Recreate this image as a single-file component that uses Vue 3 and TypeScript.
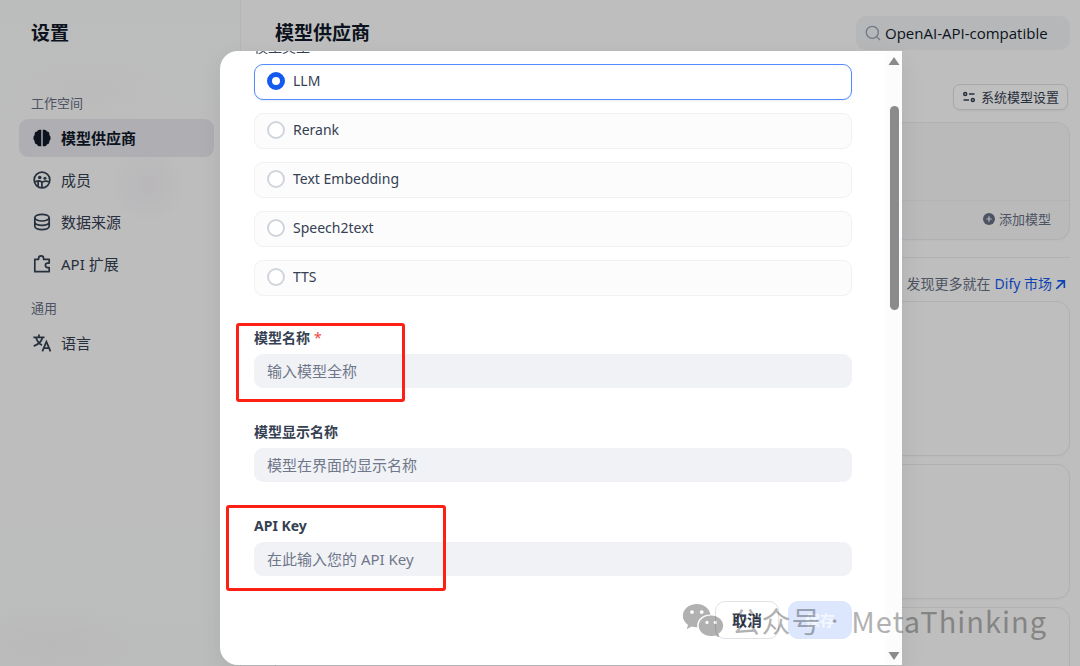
<script setup lang="ts">
import { ref } from 'vue'

interface Field {
  id: string
  label: string
  placeholder: string
  required?: boolean
  mark?: string
}

const modelTypes: string[] = ['LLM', 'Rerank', 'Text Embedding', 'Speech2text', 'TTS']
const selectedType = ref('LLM')
const query = ref('OpenAI-API-compatible')

const fields: Field[] = [
  { id: 'model-name', label: '模型名称', placeholder: '输入模型全称', required: true, mark: 'mark-name' },
  { id: 'display-name', label: '模型显示名称', placeholder: '模型在界面的显示名称' },
  { id: 'api-key', label: 'API Key', placeholder: '在此输入您的 API Key', mark: 'mark-key' },
]
const values = ref<Record<string, string>>({})
</script>

<template>
  <div class="page">
    <aside class="sidebar">
      <h1 class="heading">设置</h1>
      <nav class="nav">
        <h2 class="group">工作空间</h2>
        <a class="item active" href="#provider">
          <svg viewBox="0 0 20 20" fill="currentColor">
            <path d="M9.2.8v18.400H7.300a2.800 2.800 0 0 1-2.700-2.100A3.200 3.200 0 0 1 1.900 13.300 3.600 3.600 0 0 1 .5 10a3.600 3.600 0 0 1 1.400-3.300A3.200 3.200 0 0 1 4.600 2.900 2.800 2.800 0 0 1 7.300.8zM10.800.8v18.400h1.900a2.800 2.800 0 0 0 2.700-2.100 3.200 3.200 0 0 0 2.700-3.800A3.600 3.600 0 0 0 19.500 10a3.600 3.600 0 0 0-1.400-3.300 3.200 3.200 0 0 0-2.700-3.800A2.800 2.800 0 0 0 12.700.8z" />
          </svg>
          模型供应商
        </a>
        <a class="item" href="#members">
          <svg viewBox="0 0 20 20" fill="none" stroke="currentColor" stroke-width="1.9">
            <circle cx="10" cy="10" r="8.7" />
            <circle cx="7.500" cy="7.200" r="2" fill="currentColor" stroke="none" />
            <circle cx="13.300" cy="8" r="1.700" fill="currentColor" stroke="none" />
            <path d="M2 12.300C5 10.800 8.500 10.900 9.900 12.600V18M9.900 12.600C11.800 11 15 10.800 18 12M5.700 12v4.800" />
          </svg>
          成员
        </a>
        <a class="item" href="#sources">
          <svg viewBox="0 0 20 20" fill="none" stroke="currentColor" stroke-width="1.900">
            <ellipse cx="10" cy="5.200" rx="8" ry="3.700" />
            <path d="M2 5.200v9.600c0 2.100 3.500 3.700 8 3.700s8-1.600 8-3.700V5.200M2 10c0 2.100 3.500 3.700 8 3.700s8-1.600 8-3.700" />
          </svg>
          数据来源
        </a>
        <a class="item" href="#extensions">
          <svg viewBox="0 0 20 20" fill="none" stroke="currentColor" stroke-width="1.900" stroke-linejoin="round">
            <path d="M2 4.800H6.200V3.800a2.800 2.800 0 0 1 5.600 0V4.800H18V9H16.300a2.500 2.500 0 0 0 0 5H18V18.500H2z" />
          </svg>
          API 扩展
        </a>
        <h2 class="group second">通用</h2>
        <a class="item" href="#language">
          <svg viewBox="0 0 20 20" fill="none" stroke="currentColor" stroke-width="2">
            <path d="M.4 3.800H12.800M6.600.6V3.800M10.500 3.800C9.500 8 6 11.500.8 13.500M3.300 4C4.500 8 7 11 10 12.500M10.400 19.300 14.900 8.600 19.400 19.300M12.200 15.800H17.600" />
          </svg>
          语言
        </a>
      </nav>
    </aside>

    <main class="main">
      <header class="topbar">
        <h1 class="heading">模型供应商</h1>
        <label class="search">
          <svg viewBox="0 0 16 16" fill="none" stroke="currentColor" stroke-width="1.300">
            <circle cx="7.300" cy="7.300" r="6" />
            <path d="M11.600 11.600 15 15" />
          </svg>
          <input v-model="query" type="text" aria-label="搜索" />
        </label>
      </header>
      <div class="toolbar">
        <button class="system" type="button">
          <svg viewBox="0 0 14 14" fill="none" stroke="currentColor" stroke-width="1.500">
            <circle cx="3.200" cy="3.900" r="1.500" />
            <path d="M7 3.900H12.500M1.500 10.100H7" />
            <circle cx="10.800" cy="10.100" r="1.500" />
          </svg>
          系统模型设置
        </button>
      </div>
      <section class="card installed">
        <div class="card-foot">
          <button class="add" type="button">
            <svg viewBox="0 0 12 12">
              <circle cx="6" cy="6" r="6" fill="currentColor" />
              <path d="M6 3.300v5.400M3.300 6h5.400" stroke="#f4f4f5" stroke-width="1.200" />
            </svg>
            添加模型
          </button>
        </div>
      </section>
      <div class="discover">
        <span>发现更多就在</span>
        <a href="#market">
          Dify 市场
          <svg viewBox="0 0 12 12" fill="none" stroke="currentColor" stroke-width="1.800">
            <path d="M2.500 2H10.200V9.700M10.200 2 1.500 10.700" />
          </svg>
        </a>
      </div>
      <section class="card tall"></section>
      <section class="card medium"></section>
      <section class="card medium"></section>
    </main>

    <div class="overlay">
      <form class="modal" @submit.prevent>
        <div class="body">
          <div class="cut"><span id="type-label">模型类型</span></div>
          <div class="options" role="radiogroup" aria-labelledby="type-label">
            <label v-for="type in modelTypes" :key="type" class="option" :class="{ on: type === selectedType }">
              <input v-model="selectedType" type="radio" name="model-type" :value="type" />
              {{ type }}
            </label>
          </div>
          <div class="fields">
            <div v-for="field in fields" :key="field.id" class="field">
              <label :for="field.id">{{ field.label }}<span v-if="field.required" class="star">*</span></label>
              <input :id="field.id" v-model="values[field.id]" type="text" :placeholder="field.placeholder" />
              <span v-if="field.mark" class="mark" :class="field.mark"></span>
            </div>
          </div>
          <footer class="actions">
            <button class="cancel" type="button">取消</button>
            <button class="save" type="submit" disabled>保存</button>
          </footer>
        </div>
        <div class="scrollbar" aria-hidden="true">
          <svg viewBox="0 0 12 10"><path d="M6 1 11.500 9H.5z" /></svg>
          <div class="track"><div class="thumb"></div></div>
          <svg viewBox="0 0 12 10"><path d="M6 9 11.500 1H.5z" /></svg>
        </div>
      </form>
    </div>

    <div class="watermark">
      <svg viewBox="0 0 42 34">
        <path fill-rule="evenodd" d="M15 1C6.800 1 .8 6.300.8 12.800c0 3.700 2 6.900 5.200 9.100L4.700 26.200l5-2.600c1.800.5 3.600.8 5.600.7-1.200-7 5-13 13.200-12.800C27.300 5.500 21.800 1 15 1zM10 7.200a1.900 1.900 0 1 1 0 3.800 1.900 1.900 0 0 1 0-3.800zm9.700 0a1.900 1.900 0 1 1 0 3.800 1.900 1.900 0 0 1 0-3.800z" />
        <path fill-rule="evenodd" d="M29 12.500c-7 0-12.300 4.600-12.300 10.200S22 33 29 33c1.500 0 2.900-.2 4.200-.6l4.200 2-1.100-3.600c3-1.900 4.900-4.800 4.900-8.100 0-5.600-5.300-10.200-12.200-10.200zM25 17.800a1.600 1.600 0 1 1 0 3.200 1.600 1.600 0 0 1 0-3.200zm8.200 0a1.600 1.600 0 1 1 0 3.200 1.600 1.600 0 0 1 0-3.200z" />
      </svg>
      <span>公众号</span><span class="dot">·</span><span>MetaThinking</span>
    </div>
  </div>
</template>

<style>
body {
  margin: 0;
}
</style>

<style scoped>
.page {
  position: relative;
  display: flex;
  height: 100vh;
  overflow: hidden;
  background: #fefefe;
  color: #354052;
  font: 15px/20px 'Noto Sans', 'Noto Sans CJK SC', sans-serif;
}
.page *,
.page *::before {
  box-sizing: border-box;
}
button,
input {
  margin: 0;
  font: inherit;
  color: inherit;
}
a {
  color: inherit;
  text-decoration: none;
}
svg {
  flex: none;
}
.heading {
  margin: 0;
  font-size: 19px;
  line-height: 34px;
  font-weight: 700;
  color: #101828;
}
.sidebar {
  flex: none;
  width: 241px;
  padding: 16px 26px 0 19px;
  border-right: 1px solid #f2f3f5;
  background:
    radial-gradient(circle at 148px 185px, #f6f4f8, transparent 42px),
    radial-gradient(ellipse 100px 40px at 50px 645px, #f8f7f7, transparent),
    radial-gradient(ellipse 100px 40px at 90px 90px, #fbfafa, transparent),
    linear-gradient(#fafcfb, #fdfdfd 35%, #fcfdfc 65%, #fafcfb);
}
.sidebar .heading {
  padding-left: 12px;
}
.nav {
  display: flex;
  flex-direction: column;
  gap: 4px;
  padding-top: 44px;
}
.group {
  margin: 0;
  padding: 0 12px 3px;
  font-size: 13px;
  line-height: 18px;
  font-weight: 400;
  color: #676f83;
}
.group.second {
  padding-top: 12px;
}
.item {
  display: flex;
  align-items: center;
  gap: 10px;
  height: 38px;
  padding: 0 14px;
  border-radius: 9px;
}
.item svg {
  width: 18px;
  height: 18px;
}
.item.active {
  background: #e8e9ef;
  color: #101828;
  font-weight: 700;
}
.main {
  flex: 1;
  min-width: 0;
  padding: 16px 10px 0 34px;
}
.topbar {
  display: flex;
  justify-content: space-between;
}
.search {
  display: flex;
  align-items: center;
  gap: 4px;
  width: 214px;
  height: 34px;
  padding: 0 9px;
  border-radius: 10px;
  background: #f2f4f7;
  color: #98a2b2;
}
.search svg {
  width: 16px;
  height: 16px;
}
.search input {
  flex: 1;
  min-width: 0;
  padding: 0;
  border: 0;
  outline: 0;
  background: none;
  font-family: 'Open Sans', sans-serif;
  color: #101828;
}
.toolbar {
  display: flex;
  justify-content: flex-end;
  padding: 34px 2px 12px;
}
.system {
  display: flex;
  align-items: center;
  gap: 5px;
  height: 26px;
  padding: 0 8px;
  border: 1px solid #dfe1e5;
  border-radius: 7px;
  background: #fff;
  font-size: 13px;
  box-shadow: 0 1px 2px #10182810;
}
.system svg {
  width: 14px;
  height: 14px;
}
.card {
  border: 1px solid #ebecef;
  border-radius: 13px;
  background: #fefefe;
  box-shadow: 0 1px 2px #10182808;
  margin-bottom: 8px;
}
.installed {
  display: flex;
  flex-direction: column;
  justify-content: flex-end;
  height: 118px;
  margin-bottom: 17px;
  background: #f9f9fa;
}
.card-foot {
  display: flex;
  justify-content: flex-end;
  padding: 8px 18px 10px;
  border-top: 1px solid #f0f1f3;
}
.add {
  display: flex;
  align-items: center;
  gap: 4px;
  padding: 0;
  border: 0;
  background: none;
  font-size: 13px;
  color: #676f83;
}
.add svg {
  width: 12px;
  height: 12px;
}
.discover {
  display: flex;
  justify-content: flex-end;
  gap: 4px;
  padding: 16px 4px 7px;
  border-top: 1px solid #ebecef;
  font-size: 14px;
  color: #676f83;
}
.discover a {
  display: flex;
  align-items: center;
  gap: 3px;
  color: #155aef;
}
.discover svg {
  width: 11px;
  height: 11px;
}
.tall {
  height: 155px;
}
.medium {
  height: 135px;
}
.overlay {
  position: absolute;
  inset: 0;
  padding: 51px 178px 0 220px;
  background: rgba(0, 0, 0, 0.25);
}
.modal {
  display: flex;
  overflow: hidden;
  border-radius: 18px 0 0 18px;
  background: #fff;
  box-shadow: 0 8px 24px rgba(16, 24, 40, 0.08);
}
.body {
  flex: 1;
  min-width: 0;
  padding: 0 34px 26px;
}
.cut {
  display: flex;
  align-items: flex-end;
  height: 13px;
  padding-bottom: 7px;
  overflow: hidden;
  font-size: 14px;
}
.options {
  display: flex;
  flex-direction: column;
  gap: 13px;
}
.option {
  display: flex;
  align-items: center;
  gap: 8px;
  height: 36px;
  padding: 0 12px 2px;
  border: 1px solid #f0f1f4;
  border-radius: 9px;
  background: #fcfcfd;
  font-size: 14px;
}
.option.on {
  border-color: #528bff;
  background: #fff;
  box-shadow: 0 1px 2px #10182814;
}
.option input {
  appearance: none;
  flex: none;
  width: 18px;
  height: 18px;
  border: 2px solid #d0d5dc;
  border-radius: 50%;
  background: #fff;
}
.option input:checked {
  border: 5px solid #155aef;
}
.fields {
  display: flex;
  flex-direction: column;
  gap: 34px;
  padding-top: 32px;
}
.field {
  position: relative;
  display: flex;
  flex-direction: column;
  gap: 6px;
}
.field label {
  font-size: 14px;
  font-weight: 700;
}
.star {
  padding-left: 4px;
  font-weight: 400;
  color: #f04438;
}
.field input {
  width: 100%;
  height: 34px;
  padding: 0 13px;
  border: 0;
  border-radius: 9px;
  outline: 0;
  background: #f1f2f6;
}
.field input::placeholder {
  color: #6f778a;
  opacity: 1;
}
.mark {
  position: absolute;
  border: 3px solid #ff2015;
  border-radius: 3px;
  pointer-events: none;
}
.mark-name {
  top: -5px;
  left: -18px;
  width: 169px;
  height: 79px;
}
.mark-key {
  top: -11px;
  left: -28px;
  width: 220px;
  height: 86px;
}
.actions {
  display: flex;
  justify-content: flex-end;
  gap: 9px;
  padding-top: 25px;
}
.actions button {
  width: 64px;
  height: 38px;
  padding: 0;
  border: 1px solid #e0e2e6;
  border-radius: 10px;
  background: #fff;
  font-weight: 600;
}
.actions .save {
  border-color: #dce7fe;
  background: #dce7fe;
  color: #f3f7ff;
}
.scrollbar {
  display: flex;
  flex-direction: column;
  align-items: center;
  justify-content: space-between;
  width: 16px;
  padding: 5px 0 4px;
  background: #fcfcfc;
}
.scrollbar svg {
  width: 12px;
  height: 10px;
  fill: #8b8b8b;
}
.track {
  flex: 1;
  padding-top: 40px;
}
.thumb {
  width: 9px;
  height: 204px;
  border-radius: 5px;
  background: #8b8b8b;
}
.watermark {
  position: absolute;
  right: 33px;
  bottom: 26px;
  display: flex;
  align-items: center;
  opacity: 0.3;
  color: #000;
  font: 29px/40px 'Noto Sans CJK SC', sans-serif;
  letter-spacing: 1px;
  pointer-events: none;
}
.watermark svg {
  width: 42px;
  height: 34px;
  margin-right: 8px;
}
.watermark .dot {
  margin: 0 12px 0 9px;
  font-family: 'Open Sans', sans-serif;
}
</style>
